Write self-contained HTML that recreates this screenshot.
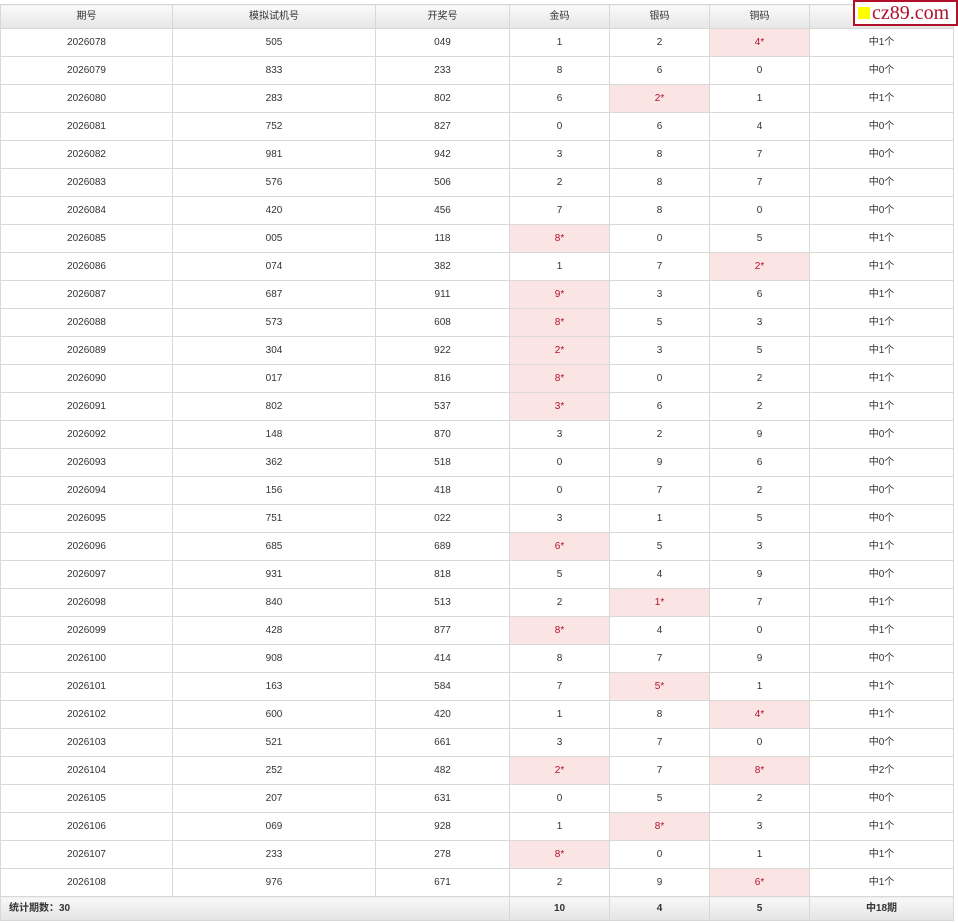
<!DOCTYPE html>
<html><head><meta charset="utf-8"><style>
body{margin:0;background:#fff;width:958px;height:923px;overflow:hidden;font-family:"Liberation Sans","Noto Sans CJK SC",sans-serif;font-size:10px;color:#333}
table{border-collapse:collapse;table-layout:fixed;width:953px;position:absolute;left:0;top:4px}
td,th{border:1px solid #d8d8d8;text-align:center;padding:0;height:27px;line-height:12px}
th{font-weight:normal;background:linear-gradient(#fafafa,#e6e6e6);height:23px}
td.h{background:#fbe4e4;color:#b0102a}
tr.f td{background:linear-gradient(#f8f8f8,#e4e4e4);font-weight:bold;height:23px}
.logo{position:absolute;left:853px;top:0;width:101px;height:22px;border:2px solid #b0102a;background:#fff;font-family:"Liberation Serif",serif;font-size:20px;color:#b0102a;line-height:22px;white-space:nowrap}
.logo span{display:inline-block;width:12px;height:12px;background:#ffff00;margin:0 2px 0 3px}
</style></head><body>
<table>
<colgroup><col style="width:172px"><col style="width:203px"><col style="width:134px"><col style="width:100px"><col style="width:100px"><col style="width:100px"><col style="width:144px"></colgroup>
<tr><th>期号</th><th>模拟试机号</th><th>开奖号</th><th>金码</th><th>银码</th><th>铜码</th><th>中奖</th></tr>
<tr><td>2026078</td><td>505</td><td>049</td><td>1</td><td>2</td><td class="h">4*</td><td>中1个</td></tr>
<tr><td>2026079</td><td>833</td><td>233</td><td>8</td><td>6</td><td>0</td><td>中0个</td></tr>
<tr><td>2026080</td><td>283</td><td>802</td><td>6</td><td class="h">2*</td><td>1</td><td>中1个</td></tr>
<tr><td>2026081</td><td>752</td><td>827</td><td>0</td><td>6</td><td>4</td><td>中0个</td></tr>
<tr><td>2026082</td><td>981</td><td>942</td><td>3</td><td>8</td><td>7</td><td>中0个</td></tr>
<tr><td>2026083</td><td>576</td><td>506</td><td>2</td><td>8</td><td>7</td><td>中0个</td></tr>
<tr><td>2026084</td><td>420</td><td>456</td><td>7</td><td>8</td><td>0</td><td>中0个</td></tr>
<tr><td>2026085</td><td>005</td><td>118</td><td class="h">8*</td><td>0</td><td>5</td><td>中1个</td></tr>
<tr><td>2026086</td><td>074</td><td>382</td><td>1</td><td>7</td><td class="h">2*</td><td>中1个</td></tr>
<tr><td>2026087</td><td>687</td><td>911</td><td class="h">9*</td><td>3</td><td>6</td><td>中1个</td></tr>
<tr><td>2026088</td><td>573</td><td>608</td><td class="h">8*</td><td>5</td><td>3</td><td>中1个</td></tr>
<tr><td>2026089</td><td>304</td><td>922</td><td class="h">2*</td><td>3</td><td>5</td><td>中1个</td></tr>
<tr><td>2026090</td><td>017</td><td>816</td><td class="h">8*</td><td>0</td><td>2</td><td>中1个</td></tr>
<tr><td>2026091</td><td>802</td><td>537</td><td class="h">3*</td><td>6</td><td>2</td><td>中1个</td></tr>
<tr><td>2026092</td><td>148</td><td>870</td><td>3</td><td>2</td><td>9</td><td>中0个</td></tr>
<tr><td>2026093</td><td>362</td><td>518</td><td>0</td><td>9</td><td>6</td><td>中0个</td></tr>
<tr><td>2026094</td><td>156</td><td>418</td><td>0</td><td>7</td><td>2</td><td>中0个</td></tr>
<tr><td>2026095</td><td>751</td><td>022</td><td>3</td><td>1</td><td>5</td><td>中0个</td></tr>
<tr><td>2026096</td><td>685</td><td>689</td><td class="h">6*</td><td>5</td><td>3</td><td>中1个</td></tr>
<tr><td>2026097</td><td>931</td><td>818</td><td>5</td><td>4</td><td>9</td><td>中0个</td></tr>
<tr><td>2026098</td><td>840</td><td>513</td><td>2</td><td class="h">1*</td><td>7</td><td>中1个</td></tr>
<tr><td>2026099</td><td>428</td><td>877</td><td class="h">8*</td><td>4</td><td>0</td><td>中1个</td></tr>
<tr><td>2026100</td><td>908</td><td>414</td><td>8</td><td>7</td><td>9</td><td>中0个</td></tr>
<tr><td>2026101</td><td>163</td><td>584</td><td>7</td><td class="h">5*</td><td>1</td><td>中1个</td></tr>
<tr><td>2026102</td><td>600</td><td>420</td><td>1</td><td>8</td><td class="h">4*</td><td>中1个</td></tr>
<tr><td>2026103</td><td>521</td><td>661</td><td>3</td><td>7</td><td>0</td><td>中0个</td></tr>
<tr><td>2026104</td><td>252</td><td>482</td><td class="h">2*</td><td>7</td><td class="h">8*</td><td>中2个</td></tr>
<tr><td>2026105</td><td>207</td><td>631</td><td>0</td><td>5</td><td>2</td><td>中0个</td></tr>
<tr><td>2026106</td><td>069</td><td>928</td><td>1</td><td class="h">8*</td><td>3</td><td>中1个</td></tr>
<tr><td>2026107</td><td>233</td><td>278</td><td class="h">8*</td><td>0</td><td>1</td><td>中1个</td></tr>
<tr><td>2026108</td><td>976</td><td>671</td><td>2</td><td>9</td><td class="h">6*</td><td>中1个</td></tr>
<tr class="f"><td colspan="3" style="text-align:left;padding-left:8px">统计期数：30</td><td>10</td><td>4</td><td>5</td><td>中18期</td></tr>
</table>
<div class="logo"><span></span>cz89.com</div>
</body></html>
